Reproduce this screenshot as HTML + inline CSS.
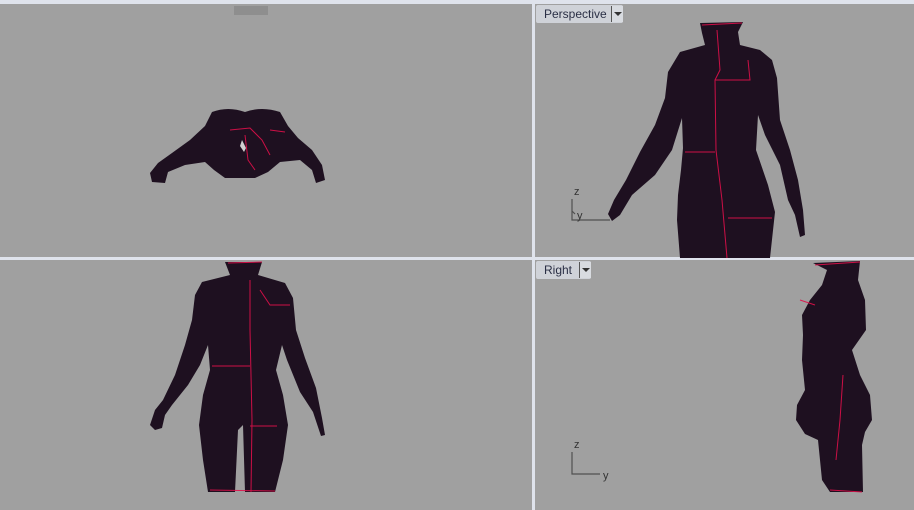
<!DOCTYPE html>
<html><head><style>
html,body{margin:0;padding:0;width:914px;height:510px;overflow:hidden;background:#a0a0a0;font-family:"Liberation Sans",sans-serif;}
.bar{position:absolute;background:#dfe3ec;}
.lbl{position:absolute;height:18px;background:#cfd2d8;border-radius:2px;font-size:12px;color:#2a2f45;line-height:18px;padding-left:8px;box-sizing:border-box;}
.lbl .dd{position:absolute;right:0;top:1px;width:11px;height:16px;border-left:1px solid #555;background:#d8dbe0}
.lbl .dd:after{content:"";position:absolute;left:2px;top:6px;border-left:4px solid transparent;border-right:4px solid transparent;border-top:4px solid #333}
svg{position:absolute;left:0;top:0}
</style></head><body>
<div class="bar" style="left:0;top:0;width:914px;height:4px"></div>
<div class="bar" style="left:532px;top:0;width:3px;height:510px"></div>
<div class="bar" style="left:0;top:257px;width:914px;height:3px"></div>
<div style="position:absolute;left:234px;top:6px;width:34px;height:9px;background:#8e8e8e"></div>
<div class="lbl" style="left:536px;top:5px;width:87px">Perspective<span class="dd"></span></div>
<div class="lbl" style="left:536px;top:261px;width:55px">Right<span class="dd"></span></div>
<svg width="914" height="510" viewBox="0 0 914 510">
<g fill="#1e1020" stroke-linejoin="round">
<path d="M212,112 Q228,106 245,112 Q262,106 280,112 L288,126 L298,138 L312,150 L322,165 L325,180 L316,183 L312,170 L300,160 L280,162 L268,172 L255,178 L225,178 L214,170 L205,162 L185,165 L168,172 L165,183 L152,182 L150,173 L158,163 L172,153 L190,140 L205,126Z"/>
<path d="M700,23 L743,22 L738,32 L740,45 L760,50 L772,60 L777,78 L780,120 L790,150 L798,180 L803,210 L805,235 L800,237 L795,215 L788,200 L780,165 L765,135 L758,115 L756,150 L768,185 L775,212 L770,258 L680,258 L677,220 L678,195 L681,170 L683,148 L682,118 L672,150 L655,175 L632,195 L620,215 L612,221 L608,214 L614,200 L626,180 L640,152 L655,125 L665,98 L668,72 L680,52 L705,45 L702,33Z"/>
<path d="M225,262 L262,262 L258,275 L285,283 L293,298 L296,330 L305,358 L316,388 L322,418 L325,435 L321,436 L313,412 L300,392 L287,360 L282,345 L276,370 L283,395 L288,425 L283,460 L275,492 L245,492 L243,425 L238,430 L235,492 L208,492 L203,460 L199,425 L203,395 L210,370 L208,345 L200,365 L188,385 L172,405 L165,415 L162,428 L155,430 L150,425 L155,410 L163,400 L175,375 L185,345 L192,320 L195,295 L202,282 L230,275Z"/>
<path d="M813,263 L860,261 L858,280 L865,300 L866,330 L852,350 L860,375 L870,395 L872,420 L865,432 L862,445 L863,492 L830,492 L822,480 L818,440 L805,434 L796,420 L797,405 L805,390 L802,360 L803,335 L802,315 L810,300 L822,285 L827,270Z"/>
</g>
<g stroke="#e0104a" stroke-width="1" fill="none" opacity=".9">
<path d="M702,25 L742,23 M717,30 L720,70 L715,80 L716,150 L722,200 L727,258 M715,80 L750,80 L748,60 M685,152 L715,152 M728,218 L772,218"/>
<path d="M228,263 L262,262 M250,280 L250,330 L252,420 L251,492 M212,366 L250,366 M250,426 L277,426 M260,290 L270,305 L290,305 M210,490 L275,491"/>
<path d="M815,265 L860,262 M843,375 L840,420 L836,460 M830,490 L862,492 M800,300 L815,305"/>
<path d="M230,130 L250,128 L262,140 L270,155 M245,135 L248,160 L255,170 M270,130 L285,132"/>
</g>
<g fill="#d0d0d0"><path d="M242,140 L246,148 L244,152 L240,146Z"/></g>
<g stroke="#505050" stroke-width="1.2" fill="none">
<path d="M572,199 V220 H610 M572,211 l3,3"/>
<path d="M572,452 V474 H600"/>
</g>
<g font-size="11" fill="#333" font-family="Liberation Sans">
<text x="574" y="195">z</text><text x="577" y="219">y</text>
<text x="574" y="448">z</text><text x="603" y="479">y</text>
</g>
</svg>
</body></html>
